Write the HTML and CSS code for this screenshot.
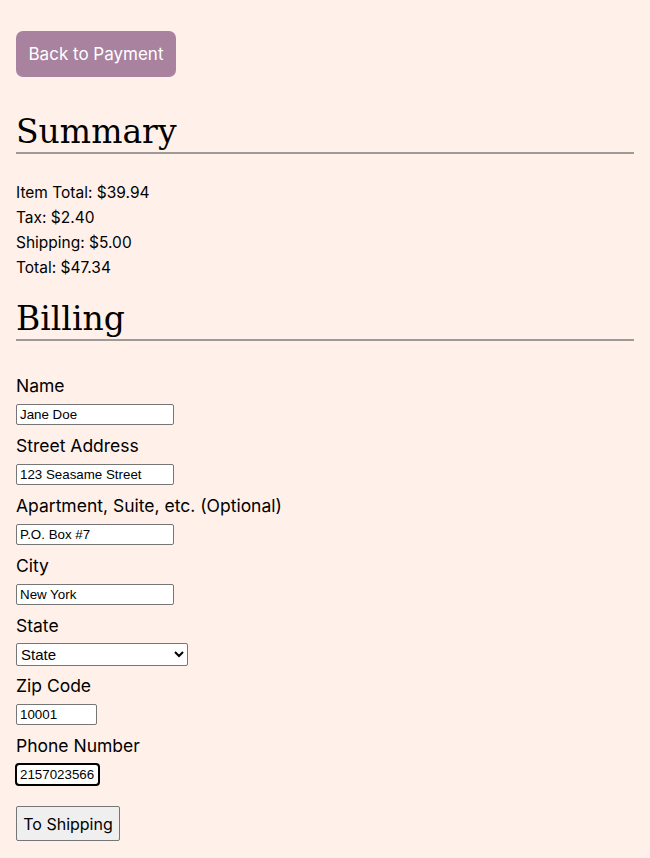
FILE: index.html
```html
<!DOCTYPE html>
<html lang="en">
<head>
<meta charset="utf-8">
<title>Checkout</title>
<link rel="stylesheet" href="styles.css">
</head>
<body>
<main class="page">
  <button class="back-btn" type="button">Back to Payment</button>
  <section class="summary">
    <h2 class="section-title">Summary</h2>
    <div class="summary-lines">
      <div>Item Total: $39.94</div>
      <div>Tax: $2.40</div>
      <div>Shipping: $5.00</div>
      <div>Total: $47.34</div>
    </div>
  </section>
  <section class="billing">
    <h2 class="section-title">Billing</h2>
    <form class="form">
      <label class="label" for="name">Name</label>
      <input class="input" id="name" type="text" value="Jane Doe">
      <label class="label" for="street">Street Address</label>
      <input class="input" id="street" type="text" value="123 Seasame Street">
      <label class="label" for="apt">Apartment, Suite, etc. (Optional)</label>
      <input class="input" id="apt" type="text" value="P.O. Box #7">
      <label class="label" for="city">City</label>
      <input class="input" id="city" type="text" value="New York">
      <label class="label" for="state">State</label>
      <select class="select" id="state"><option>State</option></select>
      <label class="label" for="zip">Zip Code</label>
      <input class="input input-zip" id="zip" type="text" value="10001">
      <label class="label" for="phone">Phone Number</label>
      <input class="input input-phone focused" id="phone" type="text" value="2157023566">
      <button class="next-btn" type="button">To Shipping</button>
    </form>
  </section>
</main>
</body>
</html>
```
FILE: styles.css
```css
html, body {
  margin: 0;
  padding: 0;
  background: #fff0e9;
}
body {
  font-family: Inter, "Noto Sans", sans-serif;
  color: #000;
}
.page {
  padding: 31px 16px 0 16px;
}
.back-btn {
  display: block;
  width: 160px;
  height: 46px;
  border: none;
  border-radius: 7px;
  background: #a8829f;
  color: #fff;
  font-family: Inter, "Noto Sans", sans-serif;
  font-size: 17px;
  padding: 0;
}
.section-title {
  font-family: "DejaVu Serif", serif;
  font-weight: normal;
  font-size: 33px;
  line-height: 40px;
  margin: 0;
  border-bottom: 2px solid #9e9a98;
}
.summary .section-title {
  margin-top: 35px;
}
.summary-lines {
  margin-top: 26px;
  font-size: 15.5px;
  line-height: 25px;
}
.billing .section-title {
  margin-top: 19px;
}
.form {
  display: flex;
  flex-direction: column;
  align-items: flex-start;
  padding-top: 33px;
}
.label {
  font-size: 17.5px;
  line-height: 24px;
  margin-bottom: 6px;
}
.input {
  box-sizing: border-box;
  width: 158px;
  height: 21px;
  margin: 0 0 9px 0;
  padding: 1px 3px;
  border: 1px solid #767676;
  border-radius: 2px;
  background: #fff;
  font-family: "Liberation Sans", Arial, sans-serif;
  font-size: 13.33px;
  color: #000;
}
.select {
  box-sizing: border-box;
  width: 172px;
  height: 23px;
  margin: -1px 0 8px 0;
  border: 1px solid #767676;
  border-radius: 2px;
  background: #fff;
  font-family: "Liberation Sans", Arial, sans-serif;
  font-size: 15px;
  color: #000;
}
.input-zip {
  width: 81px;
}
.input-phone {
  width: 83px;
  margin-bottom: 21px;
}
.focused {
  outline: 2px solid #000;
  outline-offset: -1px;
  border-radius: 3px;
}
.next-btn {
  box-sizing: border-box;
  width: 104px;
  height: 35px;
  border: 1px solid #767676;
  border-radius: 2px;
  background: #efefef;
  font-family: Inter, "Noto Sans", sans-serif;
  font-size: 16px;
  color: #000;
  padding: 0;
}
```
